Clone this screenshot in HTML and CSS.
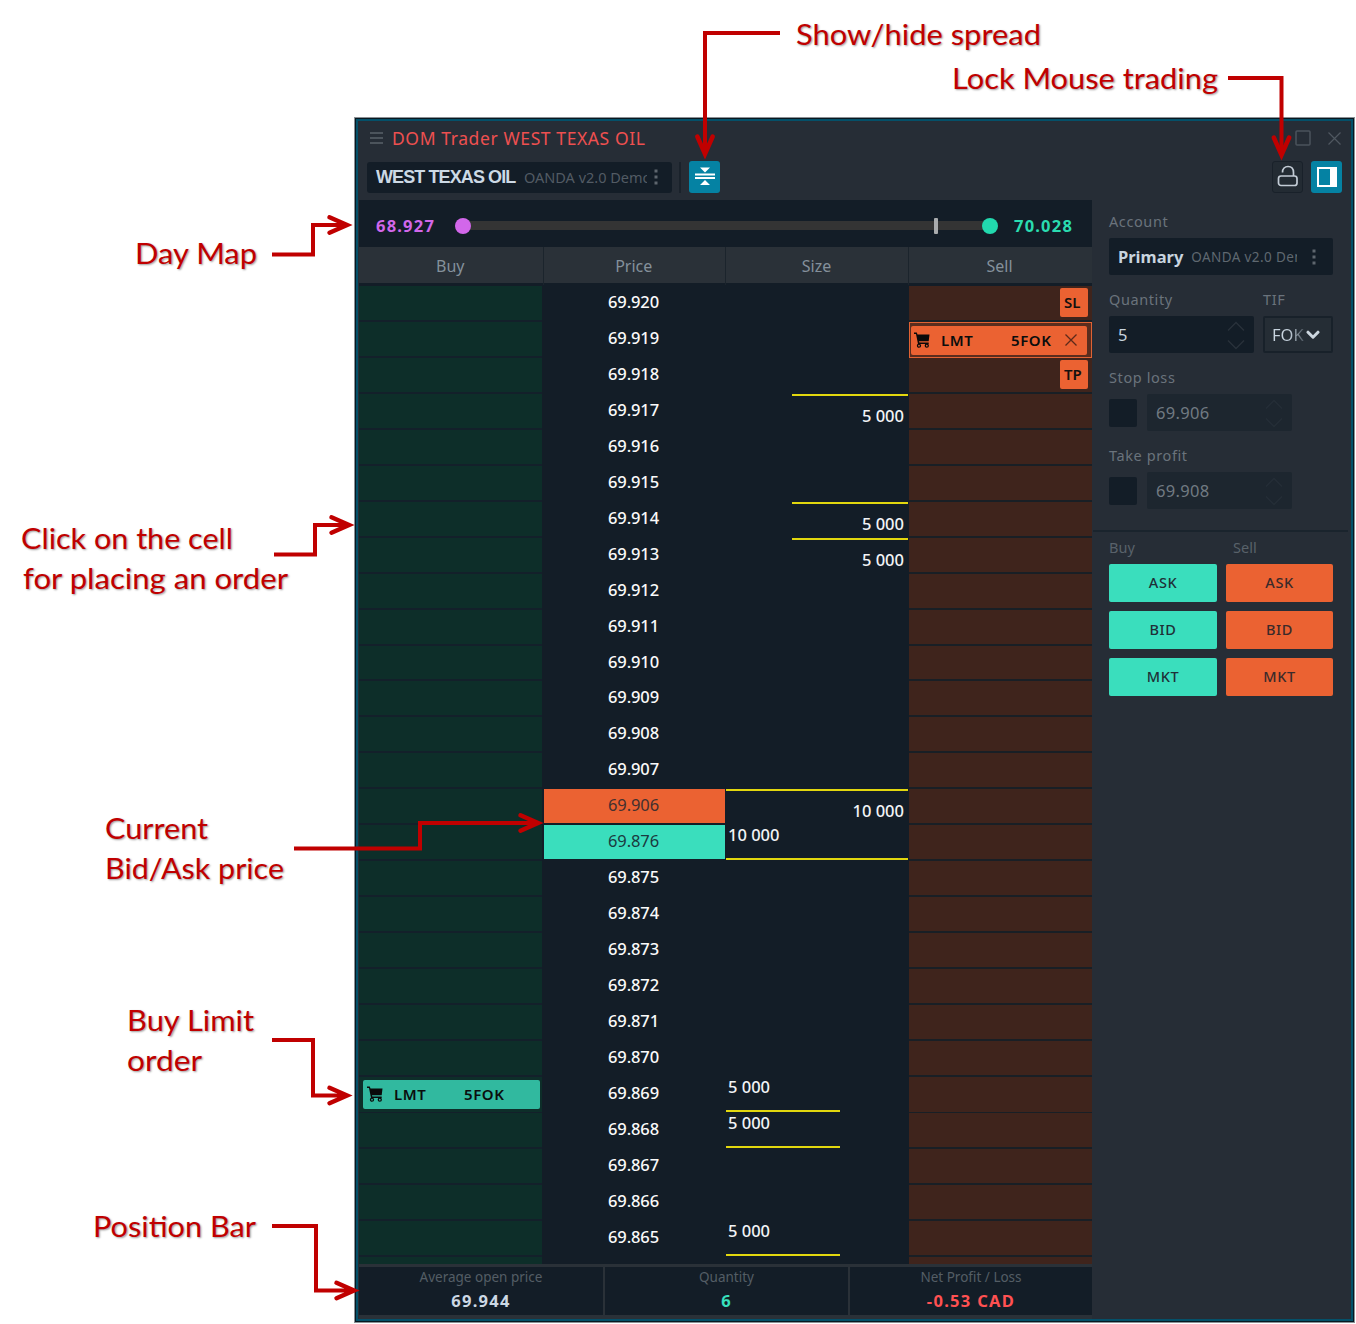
FILE: index.html
```html
<!DOCTYPE html>
<html lang="en">

<head>
    <meta charset="UTF-8">
    <meta name="viewport" content="width=device-width, initial-scale=1.0">
    <title>DOM Trader</title>
    <link rel="stylesheet" href="styles.css">
    <script src="script.js" defer></script>
</head>

<body>

    <!-- shared icons -->
    <svg class="defs">
        <symbol id="cart" viewBox="0 0 16 16">
            <path d="M0 0.500h2.800l0.700 2h12l-0.800 6.700H5l0.300 1.300h9.400v1.500H4L2 2H0z" fill="#0a0a0a" />
            <circle cx="5" cy="13.700" r="1.500" fill="none" stroke="#0a0a0a" stroke-width="1.300" />
            <circle cx="12.800" cy="13.700" r="1.500" fill="none" stroke="#0a0a0a" stroke-width="1.300" />
        </symbol>
        <symbol id="spin" viewBox="0 0 20 30">
            <path d="M2 10.500L10 2.500L18 10.500M2 20.500L10 28.500L18 20.500" fill="none" stroke="currentColor" stroke-width="1.300" />
        </symbol>
        <symbol id="dots" viewBox="0 0 4 16">
            <path d="M0.500 0.500h3v3h-3zM0.500 6.500h3v3h-3zM0.500 12.500h3v3h-3z" fill="#5e666e" />
        </symbol>
    </svg>

    <main class="window">
        <header class="title-bar">
            <svg class="burger" viewBox="0 0 13 12"><path d="M0 1h13M0 6h13M0 11h13" stroke="#59616a" stroke-width="1.300" /></svg>
            <h1 class="title">DOM Trader WEST TEXAS OIL</h1>
            <svg class="maximize" viewBox="0 0 16 16"><rect x="1" y="1" width="14" height="14" rx="1" fill="none" stroke="#4b535c" stroke-width="1.500" /></svg>
            <svg class="close" viewBox="0 0 13 13"><path d="M0.500 0.500l12 12M12.500 0.500l-12 12" stroke="#4f5760" stroke-width="1.200" /></svg>
        </header>

        <div class="toolbar">
            <div class="symbol-box">
                <span class="symbol-name">WEST TEXAS OIL</span>
                <span class="symbol-source">OANDA v2.0 Demo</span>
                <svg class="dots"><use href="#dots" /></svg>
            </div>
            <span class="separator"></span>
            <button class="tool active" type="button">
                <svg width="20" height="20" viewBox="0 0 20 20"><path d="M5 0.500h10L10 5.500zM0 6.500h20v2H0zM0 10h20v2H0zM5 18h10L10 13z" fill="#fff" /></svg>
            </button>
            <button class="tool lock" type="button">
                <svg width="22" height="24" viewBox="0 0 22 24"><rect x="1.500" y="11" width="18.500" height="9.500" rx="2.500" fill="none" stroke="#c3ccd6" stroke-width="1.700" /><path d="M5.500 7.500C5.300 3.500 8 1.500 11 1.500s5.500 2 5.500 6V11" fill="none" stroke="#c3ccd6" stroke-width="1.700" /></svg>
            </button>
            <button class="tool active" type="button">
                <svg width="20" height="20" viewBox="0 0 20 20"><path fill-rule="evenodd" d="M0 0h20v20H0zM2 2v16h11V2z" fill="#fff" /></svg>
            </button>
        </div>

        <div class="body">
            <section class="dom">
                <div class="day-map">
                    <span class="low">68.927</span>
                    <div class="track">
                        <i class="dot dot-low"></i>
                        <i class="tick"></i>
                        <i class="dot dot-high"></i>
                    </div>
                    <span class="high">70.028</span>
                </div>

                <div class="columns">
                    <span>Buy</span>
                    <span>Price</span>
                    <span>Size</span>
                    <span>Sell</span>
                </div>

                <div class="ladder" id="ladder"></div>

                <footer class="position-bar">
                    <div class="stat"><span>Average open price</span><b>69.944</b></div>
                    <div class="stat"><span>Quantity</span><b class="up">6</b></div>
                    <div class="stat"><span>Net Profit / Loss</span><b class="down">-0.53 CAD</b></div>
                </footer>
            </section>

            <aside class="order-entry">
                <div class="form">
                    <span class="label">Account</span>
                    <div class="field account">
                        <b>Primary</b>
                        <span class="account-source">OANDA v2.0 Demo</span>
                        <svg class="dots"><use href="#dots" /></svg>
                    </div>

                    <div class="pair">
                        <span class="label">Quantity</span>
                        <span class="label">TIF</span>
                    </div>
                    <div class="pair">
                        <div class="field number"><span>5</span><svg class="spin"><use href="#spin" /></svg></div>
                        <div class="field tif"><span class="tif-value">FOK</span><svg width="14" height="10" viewBox="0 0 14 10"><path d="M2 2.200l5 5 5-5" fill="none" stroke="#ccd6df" stroke-width="3" stroke-linecap="round" stroke-linejoin="round" /></svg></div>
                    </div>

                    <span class="label">Stop loss</span>
                    <div class="optional">
                        <i class="checkbox"></i>
                        <div class="field number off"><span>69.906</span><svg class="spin"><use href="#spin" /></svg></div>
                    </div>

                    <span class="label">Take profit</span>
                    <div class="optional">
                        <i class="checkbox"></i>
                        <div class="field number off"><span>69.908</span><svg class="spin"><use href="#spin" /></svg></div>
                    </div>
                </div>

                <div class="trade">
                    <span class="side">Buy</span>
                    <span class="side side-sell">Sell</span>
                    <button class="buy" type="button">ASK</button>
                    <button class="sell" type="button">ASK</button>
                    <button class="buy" type="button">BID</button>
                    <button class="sell" type="button">BID</button>
                    <button class="buy" type="button">MKT</button>
                    <button class="sell" type="button">MKT</button>
                </div>
            </aside>
        </div>
    </main>

    <!-- callouts over the window -->
    <svg class="callouts" width="1356" height="1324" viewBox="0 0 1356 1324">
        <defs>
            <marker id="head" markerUnits="userSpaceOnUse" markerWidth="34" markerHeight="26" refX="22" refY="13" orient="auto">
                <path d="M4.500 5.300L22 13L4.500 20.700" fill="none" stroke="#c00000" stroke-width="4.500" stroke-linecap="round" stroke-miterlimit="6" />
                <path d="M12 10.500L24 13L12 15.500z" fill="#c00000" />
            </marker>
        </defs>
        <g class="arrows">
            <path d="M780 33H705V154" />
            <path d="M1228 78H1281.500V155" />
            <path d="M272 254.500H313V225H347" />
            <path d="M274 554.500H315V525H349" />
            <path d="M294 848.500H420V823H538" />
            <path d="M272 1040H313V1095.500H347" />
            <path d="M272 1226H316V1290.500H354" />
        </g>
        <g class="notes">
            <text x="796" y="44.500" textLength="245" lengthAdjust="spacingAndGlyphs">Show/hide spread</text>
            <text x="952" y="88.500" textLength="266" lengthAdjust="spacingAndGlyphs">Lock Mouse trading</text>
            <text x="135" y="264" textLength="122" lengthAdjust="spacingAndGlyphs">Day Map</text>
            <text x="21" y="549" textLength="212" lengthAdjust="spacingAndGlyphs">Click on the cell</text>
            <text x="23" y="589" textLength="265" lengthAdjust="spacingAndGlyphs">for placing an order</text>
            <text x="105" y="839" textLength="103" lengthAdjust="spacingAndGlyphs">Current</text>
            <text x="105" y="879" textLength="179" lengthAdjust="spacingAndGlyphs">Bid/Ask price</text>
            <text x="127" y="1031" textLength="127" lengthAdjust="spacingAndGlyphs">Buy Limit</text>
            <text x="127" y="1071" textLength="75" lengthAdjust="spacingAndGlyphs">order</text>
            <text x="93" y="1237" textLength="163" lengthAdjust="spacingAndGlyphs">Position Bar</text>
        </g>
    </svg>

</body>

</html>
```

FILE: styles.css
```css
body {
    margin: 0;
    width: 1356px;
    height: 1324px;
    overflow: hidden;
    background: #fff;
    font-family: "Noto Sans", "Open Sans", sans-serif;
}

button {
    padding: 0;
    border: 0;
    font-family: inherit;
}

svg {
    display: block;
    flex: none;
}

.defs {
    position: absolute;
    width: 0;
    height: 0;
}

.window {
    box-sizing: border-box;
    width: 999px;
    height: 1204px;
    margin: 118px 0 0 355px;
    padding: 3px;
    border: 1px solid #071820;
    outline: 1px solid #8b9196;
    box-shadow: inset 0 0 0 2px #045069;
    background: #262d36;
}

/* title and toolbar */

.title-bar {
    box-sizing: border-box;
    display: flex;
    align-items: center;
    height: 32px;
    padding: 0 10px 0 11px;
}

.burger {
    width: 13px;
    height: 12px;
    margin-right: 9px;
}

.title {
    margin: 0;
    color: #ee5050;
    font-size: 17.5px;
    font-weight: 400;
    white-space: nowrap;
    letter-spacing: 0.6px;
}

.maximize {
    width: 16px;
    height: 16px;
    margin-left: auto;
}

.close {
    width: 13px;
    height: 13px;
    margin: 0 -1px 0 17px;
}

.toolbar {
    display: flex;
    align-items: center;
    height: 46px;
    padding: 0 8px;
}

.symbol-box {
    box-sizing: border-box;
    display: flex;
    align-items: center;
    width: 305px;
    height: 31px;
    padding: 0 14px 0 9px;
    border-radius: 3px;
    background: #131d27;
    white-space: nowrap;
}

.symbol-name {
    width: 148px;
    color: #ccd9e5;
    font: bold 18px "Liberation Sans", sans-serif;
    letter-spacing: -0.9px;
}

.symbol-source {
    width: 123px;
    overflow: hidden;
    color: #525b64;
    font-size: 14.5px;
}

.dots {
    width: 4px;
    height: 16px;
    margin-left: auto;
}

.separator {
    width: 2px;
    height: 31px;
    margin: 0 8px 0 7px;
    background: #1a222b;
}

.tool {
    box-sizing: border-box;
    display: flex;
    align-items: center;
    justify-content: center;
    width: 31px;
    height: 32px;
    border-radius: 3px;
}

.tool.active {
    background: #0582a3;
}

.tool.lock {
    margin: 0 8px 0 auto;
    border: 1px solid #19212a;
    background: #232b33;
}

.body {
    display: flex;
    height: 1119px;
}

/* ladder side */

.dom {
    width: 733px;
    background: #131d27;
}

.day-map {
    box-sizing: border-box;
    display: flex;
    align-items: center;
    height: 47px;
    padding: 4px 0 0 17px;
    font-size: 16.5px;
    font-weight: 700;
    letter-spacing: 1.2px;
}

.low {
    width: 79px;
    color: #d267ea;
}

.high {
    margin-left: 16px;
    color: #2adcb0;
}

.track {
    display: flex;
    align-items: center;
    width: 543px;
    height: 9px;
    background: linear-gradient(#343434, #343434) center / 520px 9px no-repeat;
}

.dot {
    width: 16px;
    height: 16px;
    border-radius: 50%;
}

.dot-low {
    background: #d267ea;
}

.dot-high {
    margin-left: auto;
    background: #22d9ae;
}

.tick {
    width: 4px;
    height: 16px;
    margin-left: 463px;
    border-radius: 1px;
    background: #a9abad;
}

.columns {
    display: grid;
    grid-template-columns: 184.5px 182.5px 183px 183px;
    height: 36px;
    margin-bottom: 3px;
    background: #2a3138;
}

.columns span {
    padding-right: 1px;
    border-right: 1px solid #1b242c;
    color: #84909b;
    font-size: 16px;
    line-height: 38px;
    text-align: center;
}

.columns span:last-child {
    padding-right: 2px;
    border-right: 0;
}

.ladder {
    height: 978px;
    overflow: hidden;
}

.row {
    display: grid;
    grid-template-columns: 184px 183px 183px 183px;
    height: 35.96px;
}

.cell-buy {
    box-sizing: border-box;
    margin-right: 1px;
    padding: 3px 2px 3px 4px;
    border-bottom: 2px solid #13202a;
    background: #0d2e29;
}

.cell-sell {
    box-sizing: border-box;
    display: flex;
    justify-content: flex-end;
    padding: 2px 4px 2px 0;
    border-bottom: 2px solid #191f25;
    background: #3f241c;
}

.cell-price {
    height: 34px;
    margin: 0 1px;
    padding-right: 2px;
    color: #fafafa;
    font-size: 16.5px;
    font-weight: 500;
    line-height: 32px;
    text-align: center;
    letter-spacing: -0.1px;
}

.cell-price.ask {
    background: #eb6232;
    color: #43302f;
    font-weight: 400;
}

.cell-price.bid {
    background: #3adebd;
    color: #1a3a40;
    font-weight: 400;
}

.cell-size {
    display: flex;
    flex-direction: column;
    color: #f2f4f6;
    font-size: 16.5px;
    font-weight: 500;
    line-height: 20px;
}

.size-ask {
    box-sizing: border-box;
    align-self: flex-end;
    width: 116px;
    margin-right: 1px;
    padding: 10px 4px 0 0;
    border-top: 2px solid #e2d70e;
    text-align: right;
}

.size-bid {
    box-sizing: border-box;
    width: 114px;
    height: 35px;
    padding-left: 2px;
    border-bottom: 2px solid #e2d70e;
}

.size-full {
    width: 182px;
}

.badge {
    width: 24px;
    height: 29px;
    padding-left: 4px;
    border-radius: 2px;
    background: #eb6232;
    color: #14110f;
    font-size: 15px;
    font-weight: 600;
    line-height: 28px;
}

.order {
    box-sizing: border-box;
    display: flex;
    align-items: center;
    width: 177px;
    height: 29px;
    padding: 0 8px 0 4px;
    border-radius: 2px;
    background: #31b99f;
    color: #0a0d0d;
    font-size: 15px;
    font-weight: 600;
    letter-spacing: 0.6px;
}

.order svg {
    width: 16px;
    height: 16px;
}

.order .type {
    width: 70px;
    margin-left: 11px;
}

.cell-sell.selected {
    justify-content: flex-start;
    padding: 3px 0 0 1px;
    border: 1px solid #e06233;
    background: #5a2d1e;
}

.selected .order {
    width: 176px;
    padding: 0 10px 0 3px;
    background: #eb6232;
}

.order .remove {
    width: 12px;
    height: 12px;
    margin-left: auto;
}

.position-bar {
    display: grid;
    grid-template-columns: 244px 243px 242px;
    gap: 2px;
    height: 48px;
    padding: 3px 0 4px;
    background: #2a3138;
}

.stat {
    display: flex;
    flex-direction: column;
    align-items: center;
    background: #131d27;
    color: #545d65;
    font-size: 13.5px;
    line-height: 20px;
}

.stat b {
    color: #ccd8e4;
    font-size: 16.5px;
    line-height: 28px;
    letter-spacing: 1.3px;
}

.stat .up {
    color: #37e0be;
}

.stat .down {
    color: #ff5152;
}

/* order entry side */

.order-entry {
    width: 259px;
}

.form {
    display: flex;
    flex-direction: column;
    width: 224px;
    height: 330px;
    margin-left: 1px;
    padding: 0 15px 0 16px;
    border-bottom: 2px solid #1a242d;
}

.label {
    height: 26px;
    padding-top: 9px;
    margin-bottom: 3px;
    color: #6a737c;
    font-size: 14.5px;
    line-height: 24px;
    white-space: nowrap;
    letter-spacing: 0.6px;
}

.field + .pair .label,
.pair + .label,
.optional + .label {
    padding-top: 12px;
}

.field {
    box-sizing: border-box;
    display: flex;
    align-items: center;
    height: 37px;
    border-radius: 2px;
    background: #131d27;
    color: #c8d4df;
    font-size: 16.5px;
    white-space: nowrap;
}

.account {
    padding: 0 17px 0 9px;
}

.account-source {
    width: 106px;
    margin-left: 8px;
    overflow: hidden;
    color: #5f6870;
    font-size: 13.5px;
    letter-spacing: 0.4px;
}

.pair {
    display: grid;
    grid-template-columns: 145px 70px;
    column-gap: 9px;
}

.number {
    width: 145px;
    padding: 0 8px 0 9px;
}

.spin {
    width: 20px;
    height: 30px;
    margin-left: auto;
    color: #29323b;
}

.tif {
    padding: 0 11px 0 7px;
    border: 2px solid #18212a;
    background: #252d35;
}

.tif-value {
    width: 35px;
    overflow: hidden;
    background: linear-gradient(90deg, #c8d4df 50%, #3a434c);
    -webkit-background-clip: text;
    background-clip: text;
    color: transparent;
}

.optional {
    display: flex;
    align-items: center;
    gap: 10px;
}

.checkbox {
    width: 28px;
    height: 28px;
    border-radius: 2px;
    background: #131d27;
}

.off {
    background: #1d262f;
    color: #717a82;
    letter-spacing: 0.3px;
}

.off .spin {
    color: #252e37;
}

.trade {
    display: grid;
    grid-template-columns: 108px 107px;
    grid-template-rows: 23px 38px 38px 38px;
    gap: 9px;
    padding: 0 17px;
}

.side {
    color: #59626a;
    font-size: 14.5px;
    line-height: 30px;
}

.side-sell {
    padding-left: 7px;
}

.buy,
.sell {
    padding-bottom: 2px;
    border-radius: 2px;
    background: #3adebd;
    color: #1f3037;
    font-size: 14.5px;
    font-weight: 500;
    letter-spacing: 0.6px;
}

.sell {
    background: #eb6232;
    color: #3a2a2a;
}

/* callouts */

.callouts {
    position: absolute;
    top: 0;
    left: 0;
}

.arrows {
    fill: none;
    stroke: #c00000;
    stroke-width: 4;
}

.arrows path {
    marker-end: url(#head);
}

.notes {
    fill: #c00000;
    font: 29.5px Lato, sans-serif;
    text-shadow: 1px 1px 2px rgba(0, 0, 0, .4);
}
```

FILE: script.js
```javascript
// price rows from top to bottom, the spread is hidden between 69.906 and 69.876
var prices = []
for (var p = 69920; p >= 69906; p--) prices.push(p)
for (var p = 69876; p >= 69865; p--) prices.push(p)
prices.push(0) // last row is only partly visible

var sizes = {
    69917: '<span class="size-ask">5 000</span>',
    69914: '<span class="size-ask">5 000</span>',
    69913: '<span class="size-ask">5 000</span>',
    69906: '<span class="size-ask size-full">10 000</span>',
    69876: '<span class="size-bid size-full">10 000</span>',
    69869: '<span class="size-bid">5 000</span>',
    69868: '<span class="size-bid">5 000</span>',
    69865: '<span class="size-bid">5 000</span>'
}

var order = '<svg><use href="#cart"/></svg><span class="type">LMT</span><span>5FOK</span>'
var remove = '<svg class="remove" viewBox="0 0 12 12"><path d="M0.500 0.500l11 11M11.500 0.500l-11 11" stroke="#5c2a1a" stroke-width="1.300"/></svg>'

var sells = {
    69920: '<span class="badge">SL</span>',
    69919: '<div class="order">' + order + remove + '</div>',
    69918: '<span class="badge">TP</span>'
}

var html = ''
prices.forEach(function (price) {
    var side = price == 69906 ? ' ask' : price == 69876 ? ' bid' : ''
    html += '<div class="row">'
    html += '<div class="cell-buy">' + (price == 69869 ? '<div class="order">' + order + '</div>' : '') + '</div>'
    html += '<div class="cell-price' + side + '">' + (price ? (price / 1000).toFixed(3) : '') + '</div>'
    html += '<div class="cell-size">' + (sizes[price] || '') + '</div>'
    html += '<div class="cell-sell' + (price == 69919 ? ' selected' : '') + '">' + (sells[price] || '') + '</div>'
    html += '</div>'
})
document.getElementById('ladder').innerHTML = html
```
